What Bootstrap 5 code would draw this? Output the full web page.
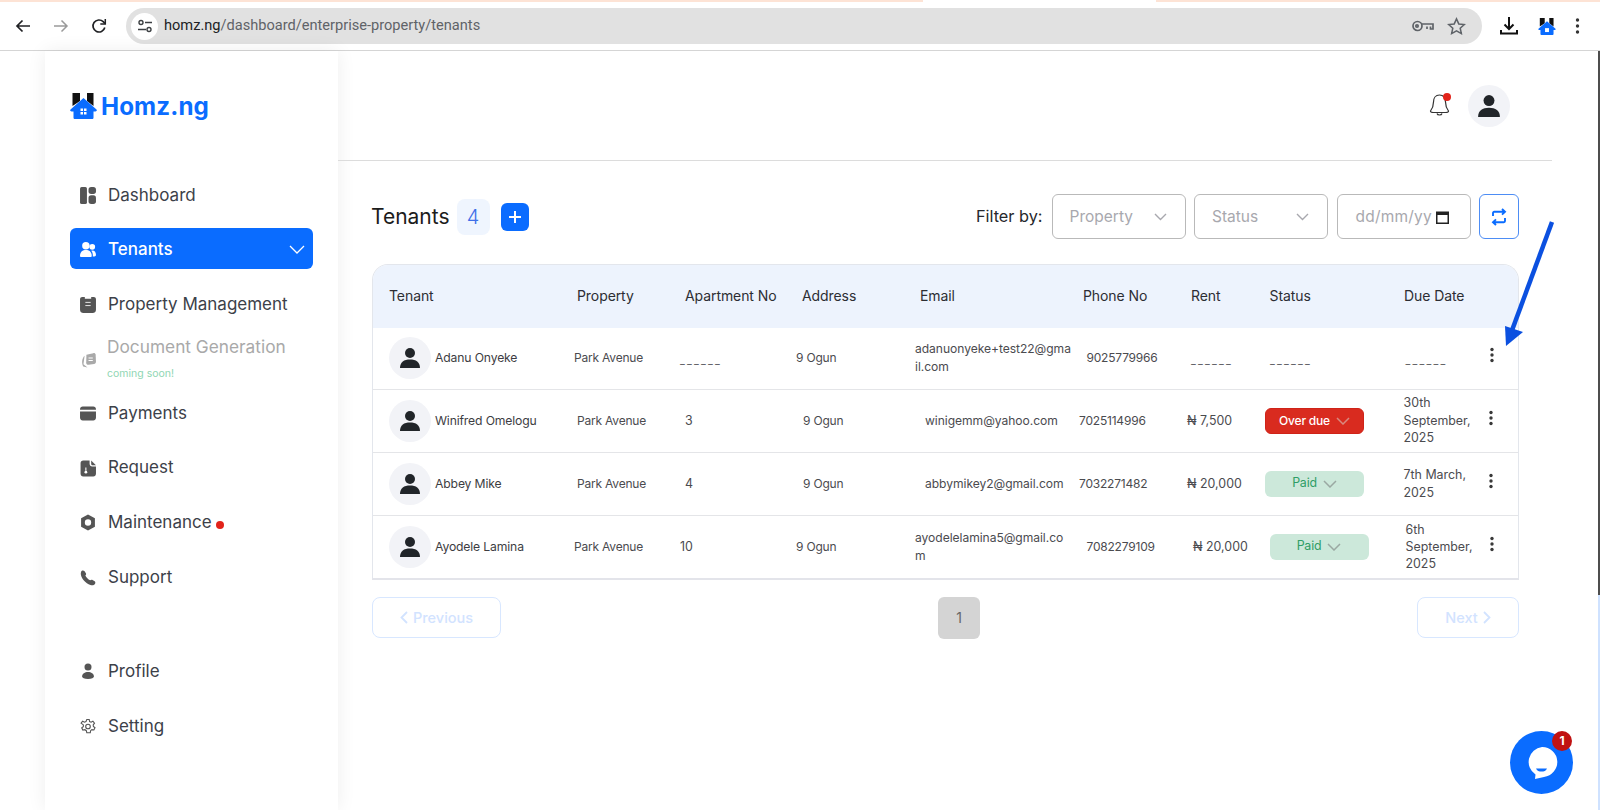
<!DOCTYPE html>
<html lang="en">
<head>
<meta charset="utf-8">
<title>Tenants</title>
<link rel="stylesheet" href="https://cdn.jsdelivr.net/npm/bootstrap@5.3.0/dist/css/bootstrap.min.css">
<style>
html,body{height:810px;overflow:hidden}
body{font-family:"Inter","Liberation Sans",sans-serif;color:#2f3237;background:#fff;position:relative}
.peach-strip{height:2px}
.peach-a{width:923px;background:#fde3d5}
.peach-b{width:444px;background:#fde3d5}
.chrome-bar{height:49px;border-bottom:1px solid #d5d5d5;background:#fff;padding:0 0 0 14px}
.chrome-btn{width:18px;height:18px;flex:none}
.chrome-nav{gap:20px;width:112px}
.omni{width:1356px;height:36px;background:#e1e1e1;border-radius:18px;padding:0 16.5px 0 5px;font-family:"Roboto",sans-serif;font-size:14.6px;color:#5f6368}
.omni b{font-weight:400;color:#202124}
.omni-tune{width:27px;height:27px;border-radius:50%;background:#fff;margin-right:6px;flex:none}
.star-gap{margin-left:12px}
.chrome-right{gap:19px;margin-left:17px}
.app-shell{height:759px}
.side-panel{width:293px;margin-left:45px;box-shadow:0 0 18px rgba(0,0,0,.07);padding:35px 25px 0 25px;flex:none}
.brand-row{height:40px;color:#0a6cff;font-weight:700;gap:4px;margin-bottom:49px}
.brand-row span{font-family:"Inter",sans-serif;font-size:24.2px;letter-spacing:.1px;margin-top:3px}
.side-link{height:41px;margin-bottom:13.55px;padding:0 0 0 10px;color:#3c4149;font-size:17px;border-radius:6px;gap:12px;width:243px}
.side-link svg.ni{width:16px;height:17px;flex:none;color:#555}
.side-link.active-link{background:#0a6cff;color:#fff;font-weight:500;margin-top:-1.5px;margin-bottom:15px;padding-top:2px}
.side-link.active-link svg.ni{color:#fff}
.side-link.muted-link{color:#a9a9a9;font-size:17.3px}
.side-link.muted-link svg.ni{color:#a9a9a9}
.soon-note{font-size:10.5px;color:#8fd6b3;line-height:12px;margin-top:8px}
.muted-stack{margin-top:-4px;margin-left:-1px}
.red-dot{width:8px;height:8px;border-radius:50%;background:#e2231a;display:inline-block;margin-left:4px;vertical-align:-1px}
.gap-side{height:40px}
.main-pane{width:1214px;flex:none}
.top-head{height:110px;border-bottom:1px solid #dcdcdc;padding-right:42px;gap:17px}
.bell-box{position:relative;width:24px;height:28px}
.bell-box i{position:absolute;right:0;top:1px;width:8px;height:8px;border-radius:50%;background:#e2231a}
.avatar-ring{border-radius:50%;background:#f2f3f7;flex:none}
.avatar-lg{width:42px;height:42px}
.work-area{padding:33px 33px 0 34px}
.tool-row{height:45px;margin-bottom:25px}
.page-title{font-size:21px;color:#1c1c1c;margin:0 7px 0 -1px;font-weight:400}
.count-chip{width:33px;height:36px;border-radius:8px;background:#eff5fe;color:#3f6fe8;font-size:20px;font-weight:300;margin-right:11px}
.add-btn{width:28px;height:28px;border-radius:6px;background:#0a6cff;padding:0}
.filter-label{font-size:16.3px;color:#26282c;margin-right:9px}
.pick-box{width:134px;height:45px;border:1px solid #b9b9b9;border-radius:6px;margin-right:8.5px;padding:0 18px 0 17px;font-size:15.5px;color:#a8a8ae;background:#fff}
.date-box{padding:0 21px 0 18px;letter-spacing:.2px;white-space:nowrap}
.swap-btn{width:40px;height:45px;border:1px solid #4d8df5;border-radius:6px;background:#fff;padding:0}
.tbl-wrap{border:1px solid #e3e6ec;border-bottom:2px solid #e3e4ea;border-radius:16px 16px 0 0;overflow:hidden;margin-bottom:17px}
.tenant-table{table-layout:fixed;width:1147px;margin:0;font-size:12.4px;color:#4b4b4f;border-collapse:collapse}
.tenant-table th{background:#edf3fd;height:63px;font-weight:400;font-size:14px;letter-spacing:-.08px;color:#2c2d33;vertical-align:middle;padding:0 0 2px;border:0}
.tenant-table td{height:63px;vertical-align:middle;padding:0;border:0;border-bottom:1px solid #e4e5e8;line-height:17.4px;color:#4b4b4f;background:#fff}
.tenant-table tr.top-b td{height:61px;padding-bottom:1px}
.tenant-table tr:last-child td{border-bottom:0}
.tenant-table tr>*:nth-child(1){padding-left:16px}
.hd-row>*:nth-child(2),.a-row>*:nth-child(2){padding-left:4px}
.hd-row>*:nth-child(3),.a-row>*:nth-child(3){padding-left:5px}
.hd-row>*:nth-child(4){padding-left:7px}
.a-row>*:nth-child(4){padding-left:8px}
.hd-row>*:nth-child(5){padding-left:5px}
.a-row>*:nth-child(5){padding-left:10px}
.hd-row>*:nth-child(6){padding-left:4px}
.hd-row>*:nth-child(7){padding-left:4px}
.hd-row>*:nth-child(8){padding-left:4.5px}
.hd-row>*:nth-child(9){padding-left:1px}
.a-row>*:nth-child(9){padding-left:.5px}
.b-row>*:nth-child(2){padding-left:1px}
.b-row>*:nth-child(4){padding-left:1px}
.b-row>*:nth-child(6){padding-left:7.5px}
.b-row>*:nth-child(7){padding-left:6px}
.b-row>*:nth-child(8){padding-left:4.5px}
.b-row>*:nth-child(9){padding-left:2.5px}
.top-b>*:nth-child(7){padding-left:4px}
.top-b>*:nth-child(8){padding-left:5px}
.tenant-table tbody td:nth-child(2),.tenant-table tbody td:nth-child(4),.tenant-table tbody td:nth-child(6){font-size:12px;letter-spacing:-.2px}
.tenant-table tbody td.mail-cell{word-break:break-all;font-size:12.1px;letter-spacing:-.05px}
.tenant-table tbody .mail-cell{padding-right:7.5px}
.due-cell{padding-right:4px}
.blank-mark{font-size:10.5px;letter-spacing:2.2px;color:#5a5a5e;position:relative;top:2px}
.who-name{margin-left:4px;color:#3d3d42;font-size:12.2px;letter-spacing:-.15px}
.state-pill{width:99px;height:26px;border-radius:6px;font-size:12px;letter-spacing:-.2px;gap:6px;border:1px solid transparent;padding:0;font-weight:500}
.state-over{background:#d92b1f;color:#fff;border-color:#cf2318}
.state-paid{background:#cce8da;color:#2f9e66;font-weight:400;font-size:12.4px}
.dots-cell svg{display:block;margin-bottom:6px}
.page-row{height:41px}
.ghost-btn{height:41px;border:1px solid #d8e7ff;border-radius:8px;background:#fff;color:#d2e3ff;font-size:14.5px;font-weight:500;padding:0;gap:5px}
.prev-w{width:129px}.next-w{width:102px}
.page-one{width:42px;height:42px;background:#d4d4d4;border-radius:6px;color:#666;font-size:14px;border:0;padding:0}
.scroll-strip{position:absolute;right:0;top:51px;width:2.5px;height:759px;background:#cfe2ff}
.scroll-thumb{height:544px;background:#4d4d4d}
.note-arrow{position:absolute;left:1494px;top:215px;width:70px;height:140px}
.chat-orb{position:absolute;left:1510px;top:731px;width:63px;height:63px;border-radius:50%;background:#0a6cff}
.chat-count{position:absolute;left:1552px;top:731px;width:20px;height:20px;border-radius:50%;background:#c01212;color:#fff;font-size:12px;font-weight:700;line-height:20px;text-align:center}
</style>
</head>
<body>
<div class="peach-strip d-flex justify-content-between"><div class="peach-a"></div><div class="peach-b"></div></div>
<header class="chrome-bar d-flex align-items-center">
  <div class="chrome-nav d-flex align-items-center">
    <svg class="chrome-btn" viewBox="0 0 18 18" fill="none" stroke="#202124" stroke-width="1.700"><path d="M16 9H3M8.500 3.500 3 9l5.500 5.500"/></svg>
    <svg class="chrome-btn" viewBox="0 0 18 18" fill="none" stroke="#9a9a9a" stroke-width="1.500"><path d="M2 9h13M9.500 3.500 15 9l-5.500 5.500"/></svg>
    <svg class="chrome-btn" viewBox="0 0 18 18" fill="none" stroke="#202124" stroke-width="1.700"><path d="M14.800 10.500A6 6 0 1 1 13.200 4.700L15 6.500"/><path d="M15.300 2v5h-5" stroke-width="1.500"/></svg>
  </div>
  <div class="omni d-flex align-items-center">
    <span class="omni-tune d-flex align-items-center justify-content-center">
      <svg width="16" height="16" viewBox="0 0 16 16" fill="none" stroke="#3c4043" stroke-width="1.400"><circle cx="4" cy="4.500" r="2"/><path d="M8 4.500h7M1 11.500h8"/><circle cx="12" cy="11.500" r="2"/></svg>
    </span>
    <span><b>homz.ng</b>/dashboard/enterprise-property/tenants</span>
    <svg class="ms-auto" width="24" height="16" viewBox="0 0 24 16" fill="none" stroke="#5f6368" stroke-width="1.700"><circle cx="6.500" cy="8" r="4.500"/><path d="M11 6h11v5h-2.500V8.500M16 8.500V11"/><circle cx="6" cy="8" r="1.200"/></svg>
    <svg class="star-gap" width="19" height="19" viewBox="0 0 20 20" fill="none" stroke="#5f6368" stroke-width="1.600"><path d="m10 2 2.400 5.300 5.800.6-4.300 3.900 1.200 5.700L10 14.600l-5.100 2.900 1.200-5.700L1.800 7.900l5.800-.6z"/></svg>
  </div>
  <div class="chrome-right d-flex align-items-center">
    <svg width="20" height="20" viewBox="0 0 20 20" fill="none" stroke="#111" stroke-width="2"><path d="M10 1v12M5.500 8.500 10 13l4.500-4.500M2 14v3.500h16V14"/></svg>
    <svg width="18" height="17" viewBox="0 0 27 26"><path fill="#111" d="M2.500 0H10v8l-7.500 5zM17 0h6.500v13L17 8z"/><path fill="#0a6cff" d="M13.500 5 26.500 16.500c.8 1 0 2-1 2h-2v6c0 1-.5 1.500-1.500 1.500H5c-1 0-1.500-.5-1.500-1.500v-6h-2c-1 0-1.800-1-1-2z"/><path fill="#fff" d="M10.500 15.500h6v6h-6z"/></svg>
    <svg width="5" height="18" viewBox="0 0 5 18" fill="#333"><circle cx="2.500" cy="3" r="1.700"/><circle cx="2.500" cy="9" r="1.700"/><circle cx="2.500" cy="15" r="1.700"/></svg>
  </div>
</header>

<div class="app-shell d-flex">
  <aside class="side-panel">
    <div class="brand-row d-flex align-items-center">
      <svg width="27" height="26" viewBox="0 0 27 26"><path fill="#111" d="M2.500 0H10v8l-7.500 5zM17 0h6.500v13L17 8z"/><path fill="#0a6cff" d="M13.500 5 26.500 16.500c.8 1 0 2-1 2h-2v6c0 1-.5 1.500-1.500 1.500H5c-1 0-1.500-.5-1.500-1.500v-6h-2c-1 0-1.800-1-1-2z"/><path fill="#fff" d="M10.500 15.500h2.500v2.500h-2.500zM14 15.500h2.500v2.500H14zM10.500 19h2.500v2.500h-2.500zM14 19h2.500v2.500H14z"/></svg>
      <span>Homz.ng</span>
    </div>
    <nav class="nav flex-column">
      <a class="nav-link side-link d-flex align-items-center" href="#"><svg class="ni" viewBox="0 0 15 16" fill="currentColor"><rect x="0" y="0" width="6.500" height="16" rx="1.500"/><rect x="8" y="0" width="7" height="6.500" rx="2.500"/><rect x="8" y="7.800" width="7" height="8.200" rx="2.500"/></svg>Dashboard</a>
      <a class="nav-link side-link active-link d-flex align-items-center" href="#"><svg class="ni" viewBox="0 0 15 16" fill="currentColor"><circle cx="5.500" cy="4.500" r="3.500"/><circle cx="11.500" cy="5.500" r="2.700"/><path d="M0 14c0-4 2.500-5.500 5.500-5.500S11 10 11 14c0 .8-.5 1-1 1H1c-.6 0-1-.3-1-1z"/><path d="M11.500 9c2.500 0 3.500 2 3.500 4 0 1-.5 1.500-1.500 1.500H12c.2-2.200-.2-4-1.500-5.400z"/></svg>Tenants<svg class="ms-auto me-2" width="16" height="9" viewBox="0 0 16 9" fill="none" stroke="#fff" stroke-width="1.300"><path d="m1 1 7 7 7-7"/></svg></a>
      <a class="nav-link side-link d-flex align-items-center" href="#"><svg class="ni" viewBox="0 0 15 16" fill="currentColor"><path d="M2 1h2.500v1.500h6V1H13c1 0 2 .8 2 2v10c0 2-1.500 3-3 3H3c-1.500 0-3-1-3-3V3c0-1.200 1-2 2-2z"/><path d="M5 6h5M5 9h5" stroke="#fff" stroke-width=".8"/></svg>Property Management</a>
      <a class="nav-link side-link muted-link d-flex align-items-center" href="#"><svg class="ni" viewBox="0 0 15 16" fill="currentColor"><path d="M6 3.500 12.500 2c1.200-.2 2 .4 2.200 1.400l.3 6.600c0 1.200-.7 2-1.800 2.200L8 13c-1.200 0-2-.6-2.200-1.800z"/><path d="M4.300 4.500 3.200 12.500 7 15.500 3 14.500C1.500 12 1.500 7 4.300 4.500z"/><path d="M8 6.500h4M8 9h4" stroke="#fff" stroke-width="1"/></svg><span class="muted-stack d-block">Document Generation<span class="soon-note d-block">coming soon!</span></span></a>
      <a class="nav-link side-link d-flex align-items-center" href="#"><svg class="ni" viewBox="0 0 15 16" fill="currentColor"><path d="M2.500 1.500h10c1.400 0 2.500 1 2.500 2.500v.5H0V4c0-1.500 1.100-2.500 2.500-2.500zM0 6h15v6c0 1.500-1.100 2.500-2.500 2.500h-10C1.100 14.500 0 13.500 0 12z"/></svg>Payments</a>
      <a class="nav-link side-link d-flex align-items-center" href="#"><svg class="ni" viewBox="0 0 15 16" fill="currentColor"><path d="M3 .5h6v3c0 1.500 1 2.500 2.500 2.500H15v7c0 1.500-1 2.500-2.500 2.500H3C1.500 15.500.5 14.500.5 13V3C.5 1.500 1.500.5 3 .5z"/><path d="M10.500.5 15 5h-3c-1 0-1.500-.5-1.500-1.500z"/><circle cx="5.500" cy="11.500" r="1.300" fill="#fff"/><path d="M5.500 7v3" stroke="#fff"/></svg>Request</a>
      <a class="nav-link side-link d-flex align-items-center" href="#"><svg class="ni" viewBox="0 0 15 16" fill="currentColor"><path fill-rule="evenodd" d="M7.500.5 14 4v8l-6.500 3.500L1 12V4zm0 4.500a3 3 0 1 0 0 6 3 3 0 0 0 0-6z"/></svg><span>Maintenance<i class="red-dot"></i></span></a>
      <a class="nav-link side-link d-flex align-items-center" href="#"><svg class="ni" viewBox="0 0 15 16" fill="currentColor"><path d="M1 2.500C1.500 1 3.500 1 4.300 2l1.200 2c.4.800.2 1.500-.5 2.200 1 2 2.500 3.500 4.500 4.500.7-.7 1.500-.9 2.300-.4l2 1.300c1 .8.800 2.500-.5 3.200-1 .6-2.300.8-3.500.3C5 13.300 1.800 9.800.8 5.500.6 4.500.7 3.500 1 2.500z"/></svg>Support</a>
      <div class="gap-side"></div>
      <a class="nav-link side-link d-flex align-items-center" href="#"><svg class="ni" viewBox="0 0 15 16" fill="currentColor"><circle cx="7.500" cy="3.800" r="3.300"/><path d="M2 12.500C2 10 4.500 8.500 7.500 8.500S13 10 13 12.500c0 1.800-2 2.500-5.500 2.500S2 14.300 2 12.500z"/></svg>Profile</a>
      <a class="nav-link side-link d-flex align-items-center" href="#"><svg class="ni" viewBox="0 0 16 16" fill="none" stroke="currentColor" stroke-width="1.100"><circle cx="8" cy="8" r="2.300"/><path d="M6.800 1h2.400l.4 2 1.500.7 1.800-1 1.600 2-1.300 1.600.2 1.700 1.600 1.200-1.100 2.300-2-.4-1.300 1.100-.3 2H6.800l-.5-2-1.400-1-2 .4-1.200-2.300 1.600-1.200.1-1.700L1.100 4.700l1.500-2 1.900 1 1.500-.7z"/></svg>Setting</a>
    </nav>
  </aside>

  <main class="main-pane">
    <div class="top-head d-flex align-items-center justify-content-end">
      <div class="bell-box d-flex align-items-center justify-content-center">
        <svg width="21" height="25" viewBox="0 0 21 25" fill="none" stroke="#333" stroke-width="1.200"><path d="M10.500 2C6.500 2 4.500 5 4.500 9c0 5-1.500 7-3 9 0 1 1 1.500 3 1.500h12c2 0 3-.5 3-1.500-1.500-2-3-4-3-9 0-4-2-7-6-7z"/><path d="M8 20.500c.5 2 4.500 2 5 0"/></svg>
        <i></i>
      </div>
      <div class="avatar-ring avatar-lg d-flex align-items-center justify-content-center">
        <svg width="22" height="24" viewBox="0 0 20 22" fill="#212529"><circle cx="10" cy="6" r="5"/><path d="M0 21c0-6 4-8.500 10-8.500s10 2.500 10 8.500z"/></svg>
      </div>
    </div>

    <section class="work-area">
      <div class="tool-row d-flex align-items-center">
        <h1 class="page-title">Tenants</h1>
        <span class="count-chip d-flex align-items-center justify-content-center">4</span>
        <button class="btn add-btn d-flex align-items-center justify-content-center" type="button" aria-label="Add"><svg width="14" height="14" viewBox="0 0 14 14" stroke="#fff" stroke-width="2" fill="none"><path d="M7 1v12M1 7h12"/></svg></button>
        <span class="filter-label ms-auto">Filter by:</span>
        <div class="pick-box d-flex align-items-center justify-content-between">Property<svg width="13" height="8" viewBox="0 0 13 8" fill="none" stroke="#a8a8ae" stroke-width="1.400"><path d="m1 1 5.500 5.500L12 1"/></svg></div>
        <div class="pick-box d-flex align-items-center justify-content-between">Status<svg width="13" height="8" viewBox="0 0 13 8" fill="none" stroke="#a8a8ae" stroke-width="1.400"><path d="m1 1 5.500 5.500L12 1"/></svg></div>
        <div class="pick-box date-box d-flex align-items-center justify-content-between">dd/mm/yy<svg width="13" height="14" viewBox="0 0 13 14" fill="#222"><path fill-rule="evenodd" d="M0 1.500h13V14H0zM1.500 5v7.500h10V5z"/></svg></div>
        <button class="btn swap-btn d-flex align-items-center justify-content-center" type="button" aria-label="Reset"><svg width="16" height="18" viewBox="0 0 16 18" fill="none" stroke="#0a6cff" stroke-width="1.900"><path d="M2 8V5c0-.8.5-1.200 1.200-1.200H14M11 1l3 2.800-3 2.800M14 10v3c0 .8-.5 1.200-1.200 1.200H2M5 17l-3-2.800L5 11.400"/></svg></button>
      </div>

      <div class="tbl-wrap">
        <table class="table tenant-table">
          <colgroup><col style="width:200px"><col style="width:107px"><col style="width:115px"><col style="width:120px"><col style="width:164px"><col style="width:108px"><col style="width:78px"><col style="width:138px"><col style="width:82px"><col style="width:35px"></colgroup>
          <thead>
            <tr class="hd-row"><th>Tenant</th><th>Property</th><th>Apartment No</th><th>Address</th><th>Email</th><th>Phone No</th><th>Rent</th><th>Status</th><th>Due Date</th><th></th></tr>
          </thead>
          <tbody>
            <tr class="b-row top-b">
              <td><div class="d-flex align-items-center"><span class="avatar-ring avatar-lg d-flex align-items-center justify-content-center"><svg width="20" height="22" viewBox="0 0 20 22" fill="#212529"><circle cx="10" cy="6" r="5"/><path d="M0 21c0-6 4-8.500 10-8.500s10 2.500 10 8.500z"/></svg></span><span class="who-name">Adanu Onyeke</span></div></td>
              <td>Park Avenue</td><td><span class="blank-mark">______</span></td><td>9 Ogun</td><td class="mail-cell">adanuonyeke+test22@gmail.com</td><td>9025779966</td><td><span class="blank-mark">______</span></td><td><span class="blank-mark">______</span></td><td><span class="blank-mark">______</span></td>
              <td class="dots-cell"><svg width="12" height="16" viewBox="0 0 12 16" fill="#3a3a3a"><circle cx="7" cy="2.500" r="1.700"/><circle cx="7" cy="8" r="1.700"/><circle cx="7" cy="13.500" r="1.700"/></svg></td>
            </tr>
            <tr class="a-row">
              <td><div class="d-flex align-items-center"><span class="avatar-ring avatar-lg d-flex align-items-center justify-content-center"><svg width="20" height="22" viewBox="0 0 20 22" fill="#212529"><circle cx="10" cy="6" r="5"/><path d="M0 21c0-6 4-8.500 10-8.500s10 2.500 10 8.500z"/></svg></span><span class="who-name">Winifred Omelogu</span></div></td>
              <td>Park Avenue</td><td>3</td><td>9 Ogun</td><td class="mail-cell">winigemm@yahoo.com</td><td>7025114996</td><td>₦ 7,500</td>
              <td><button class="btn state-pill state-over d-flex align-items-center justify-content-center" type="button">Over due<svg width="14" height="8" viewBox="0 0 14 8" fill="none" stroke="#d9897f" stroke-width="1.500"><path d="m1 1 6 6 6-6"/></svg></button></td>
              <td class="due-cell">30th September, 2025</td>
              <td class="dots-cell"><svg width="12" height="16" viewBox="0 0 12 16" fill="#3a3a3a"><circle cx="6" cy="2.500" r="1.700"/><circle cx="6" cy="8" r="1.700"/><circle cx="6" cy="13.500" r="1.700"/></svg></td>
            </tr>
            <tr class="a-row">
              <td><div class="d-flex align-items-center"><span class="avatar-ring avatar-lg d-flex align-items-center justify-content-center"><svg width="20" height="22" viewBox="0 0 20 22" fill="#212529"><circle cx="10" cy="6" r="5"/><path d="M0 21c0-6 4-8.500 10-8.500s10 2.500 10 8.500z"/></svg></span><span class="who-name">Abbey Mike</span></div></td>
              <td>Park Avenue</td><td>4</td><td>9 Ogun</td><td class="mail-cell">abbymikey2@gmail.com</td><td>7032271482</td><td>₦ 20,000</td>
              <td><button class="btn state-pill state-paid d-flex align-items-center justify-content-center" type="button">Paid<svg width="14" height="8" viewBox="0 0 14 8" fill="none" stroke="#9aa8a2" stroke-width="1.500"><path d="m1 1 6 6 6-6"/></svg></button></td>
              <td class="due-cell">7th March, 2025</td>
              <td class="dots-cell"><svg width="12" height="16" viewBox="0 0 12 16" fill="#3a3a3a"><circle cx="6" cy="2.500" r="1.700"/><circle cx="6" cy="8" r="1.700"/><circle cx="6" cy="13.500" r="1.700"/></svg></td>
            </tr>
            <tr class="b-row">
              <td><div class="d-flex align-items-center"><span class="avatar-ring avatar-lg d-flex align-items-center justify-content-center"><svg width="20" height="22" viewBox="0 0 20 22" fill="#212529"><circle cx="10" cy="6" r="5"/><path d="M0 21c0-6 4-8.500 10-8.500s10 2.500 10 8.500z"/></svg></span><span class="who-name">Ayodele Lamina</span></div></td>
              <td>Park Avenue</td><td>10</td><td>9 Ogun</td><td class="mail-cell">ayodelelamina5@gmail.com</td><td>7082279109</td><td>₦ 20,000</td>
              <td><button class="btn state-pill state-paid d-flex align-items-center justify-content-center" type="button">Paid<svg width="14" height="8" viewBox="0 0 14 8" fill="none" stroke="#9aa8a2" stroke-width="1.500"><path d="m1 1 6 6 6-6"/></svg></button></td>
              <td class="due-cell">6th September, 2025</td>
              <td class="dots-cell"><svg width="12" height="16" viewBox="0 0 12 16" fill="#3a3a3a"><circle cx="7" cy="2.500" r="1.700"/><circle cx="7" cy="8" r="1.700"/><circle cx="7" cy="13.500" r="1.700"/></svg></td>
            </tr>
          </tbody>
        </table>
      </div>

      <div class="page-row d-flex align-items-center justify-content-between">
        <button class="btn ghost-btn prev-w d-flex align-items-center justify-content-center" type="button"><svg width="8" height="13" viewBox="0 0 8 13" fill="none" stroke="#d2e3ff" stroke-width="1.800"><path d="M7 1 1.500 6.500 7 12"/></svg>Previous</button>
        <button class="btn page-one" type="button">1</button>
        <button class="btn ghost-btn next-w d-flex align-items-center justify-content-center" type="button">Next<svg width="8" height="13" viewBox="0 0 8 13" fill="none" stroke="#d2e3ff" stroke-width="1.800"><path d="m1 1 5.500 5.500L1 12"/></svg></button>
      </div>
    </section>
  </main>
</div>

<div class="scroll-strip"><div class="scroll-thumb"></div></div>
<svg class="note-arrow" viewBox="0 0 70 140"><path d="M58 7 17 118" stroke="#0b50e0" stroke-width="4.500" fill="none"/><path d="M12 131 11 111 29 117z" fill="#0b50e0"/></svg>
<div class="chat-orb d-flex align-items-center justify-content-center"><svg width="32" height="34" viewBox="0 0 32 34"><path fill="#fff" d="M16 1a15 15 0 0 1 2 29.900L9 33l.5-4.500A15 15 0 0 1 16 1z"/><path fill="#0a6cff" d="M10 22.500h11c-1 2.500-3 3-5.500 3s-4.500-.5-5.500-3z"/></svg></div>
<div class="chat-count">1</div>
<script src="https://cdn.jsdelivr.net/npm/bootstrap@5.3.0/dist/js/bootstrap.bundle.min.js"></script>
</body>
</html>
